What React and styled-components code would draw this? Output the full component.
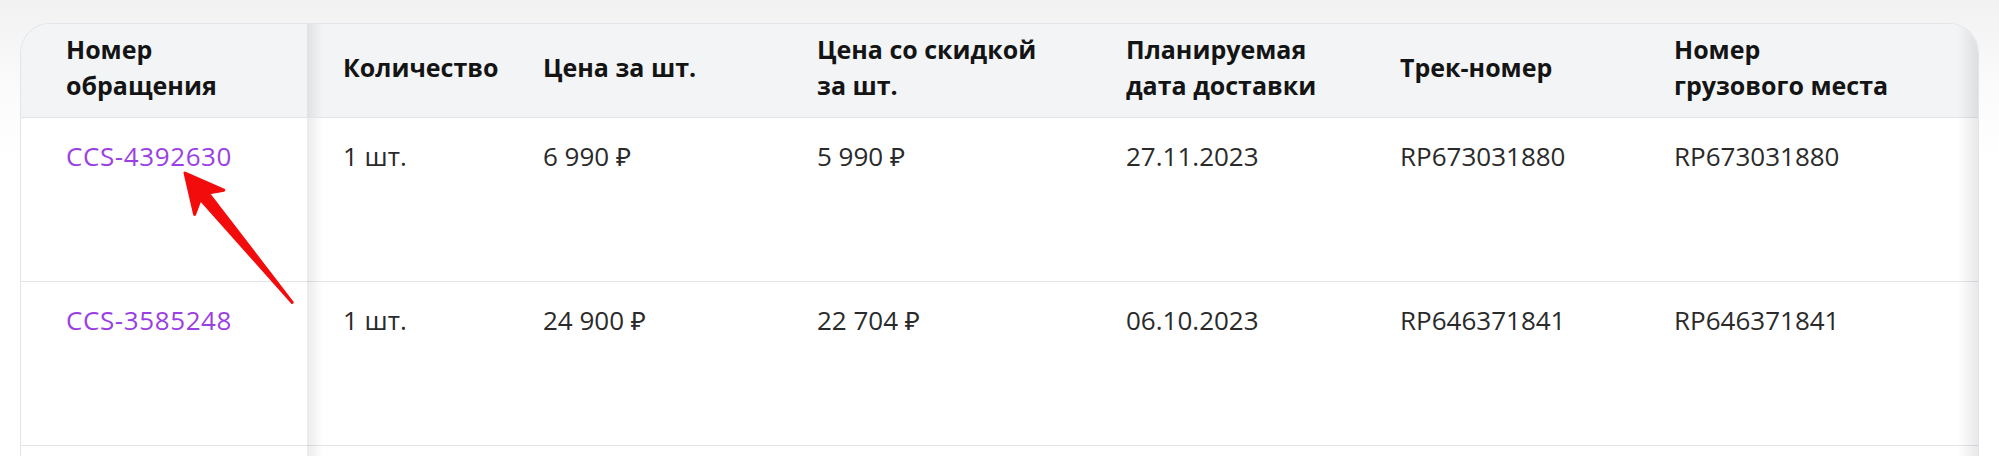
import React from "react";
import styled, { createGlobalStyle } from "styled-components";

const GlobalStyle = createGlobalStyle`
  html, body {
    margin: 0;
    height: 100%;
    overflow: hidden;
  }
  body {
    background: linear-gradient(180deg, #f1f1f1 0px, #f4f4f4 24px, #fbfbfb 90px, #ffffff 160px);
    font-family: "Open Sans", "Noto Sans", sans-serif;
  }
`;

const columns = [
  { key: "ticket", title: ["Номер", "обращения"], width: 286, first: true },
  { key: "qty", title: ["Количество"], width: 200 },
  { key: "price", title: ["Цена за шт."], width: 274 },
  { key: "discount", title: ["Цена со скидкой", "за шт."], width: 309 },
  { key: "date", title: ["Планируемая", "дата доставки"], width: 274 },
  { key: "track", title: ["Трек-номер"], width: 274 },
  { key: "cargo", title: ["Номер", "грузового места"], width: 340 },
];

const rows = [
  {
    ticket: "CCS-4392630",
    qty: "1 шт.",
    price: "6 990 ₽",
    discount: "5 990 ₽",
    date: "27.11.2023",
    track: "RP673031880",
    cargo: "RP673031880",
  },
  {
    ticket: "CCS-3585248",
    qty: "1 шт.",
    price: "24 900 ₽",
    discount: "22 704 ₽",
    date: "06.10.2023",
    track: "RP646371841",
    cargo: "RP646371841",
  },
];

export default function App() {
  return (
    <Page>
      <GlobalStyle />
      <Card>
        <Table>
          <colgroup>
            {columns.map((c) => (
              <col key={c.key} style={{ width: c.width }} />
            ))}
          </colgroup>
          <thead>
            <tr>
              {columns.map((c) => (
                <HeadCell key={c.key} $first={c.first}>
                  {c.title.map((line, i) => (
                    <React.Fragment key={i}>
                      {i > 0 && <br />}
                      {line}
                    </React.Fragment>
                  ))}
                </HeadCell>
              ))}
            </tr>
          </thead>
          <tbody>
            {rows.map((r) => (
              <Row key={r.ticket}>
                {columns.map((c) => (
                  <Cell key={c.key} $first={c.first}>
                    {c.first ? <TicketLink href="#">{r[c.key]}</TicketLink> : r[c.key]}
                  </Cell>
                ))}
              </Row>
            ))}
            <Row>
              {columns.map((c) => (
                <Cell key={c.key} $first={c.first} />
              ))}
            </Row>
          </tbody>
        </Table>
        <ScrollShade />
      </Card>
      <Arrow viewBox="0 0 140 160" width="140" height="160">
        <polygon
          points="15,13 53.8,30.2 38,32.9 122.2,142.4 30.3,39.3 24.6,54.4"
          fill="#f20c0c"
          stroke="#f20c0c"
          strokeWidth="3"
          strokeLinejoin="round"
        />
      </Arrow>
    </Page>
  );
}

const Page = styled.div`
  position: relative;
  padding: 23px 20px 0 20px;
`;

const Card = styled.div`
  position: relative;
  width: 1957px;
  background: #ffffff;
  border: 1px solid #e1e4e8;
  border-bottom: none;
  border-radius: 30px 30px 0 0;
  overflow: hidden;
`;

const Table = styled.table`
  width: 1957px;
  table-layout: fixed;
  border-collapse: collapse;
  border-spacing: 0;
`;

const HeadCell = styled.th`
  position: relative;
  height: 93px;
  box-sizing: border-box;
  padding: 0 20px 6px ${(p) => (p.$first ? "45px" : "36px")};
  background: #f3f4f6;
  border-bottom: 1px solid #e1e4e8;
  text-align: left;
  vertical-align: middle;
  font-size: 25px;
  font-weight: 700;
  line-height: 36px;
  color: #141414;
  white-space: nowrap;

  ${(p) =>
    p.$first &&
    `
    &::after {
      content: "";
      position: absolute;
      top: 0;
      bottom: 0;
      right: -16px;
      width: 16px;
      background: linear-gradient(90deg, rgba(0,0,0,0.08), rgba(0,0,0,0));
      z-index: 1;
    }
  `}
`;

const Row = styled.tr`
  border-bottom: 1px solid #e1e4e8;
`;

const Cell = styled.td`
  position: relative;
  height: 164px;
  padding: 20px 20px 0 ${(p) => (p.$first ? "45px" : "36px")};
  box-sizing: border-box;
  vertical-align: top;
  font-size: 26px;
  line-height: 36px;
  color: #2a2a2a;
  white-space: nowrap;

  ${(p) =>
    p.$first &&
    `
    &::after {
      content: "";
      position: absolute;
      top: 0;
      bottom: -1px;
      right: -16px;
      width: 16px;
      background: linear-gradient(90deg, rgba(0,0,0,0.08), rgba(0,0,0,0));
      z-index: 1;
    }
  `}
`;

const TicketLink = styled.a`
  color: #9b3fe3;
  text-decoration: none;
  letter-spacing: 0.6px;
`;

const ScrollShade = styled.div`
  position: absolute;
  top: 0;
  right: 0;
  bottom: 0;
  width: 20px;
  background: linear-gradient(90deg, rgba(0,0,0,0), rgba(0,0,0,0.09));
  pointer-events: none;
`;

const Arrow = styled.svg`
  position: absolute;
  left: 170px;
  top: 160px;
  pointer-events: none;
`;
